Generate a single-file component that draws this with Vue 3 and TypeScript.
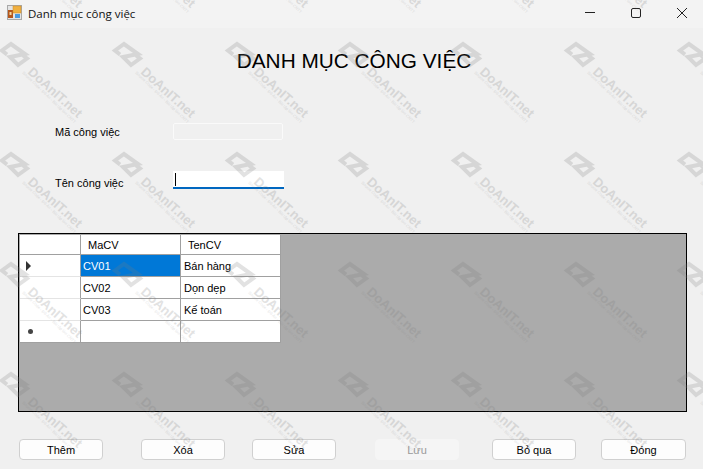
<template>
  <div class="window">
    <div class="titlebar">
      <svg class="app-icon" width="16" height="16" viewBox="0 0 16 16">
        <rect x="0.5" y="0.5" width="14" height="14" fill="#e4e4e4" stroke="#a8a8a8" />
        <rect x="1" y="5" width="5" height="8" fill="#b5561c" />
        <rect x="2.5" y="7" width="2" height="3" fill="#f6d9a0" />
        <rect x="6" y="1" width="8" height="7" fill="#f0b040" stroke="#c98a2a" stroke-width="0.5" />
        <rect x="8" y="9" width="5" height="4" fill="#4a9ae0" />
      </svg>
      <span class="title-text">Danh mục công việc</span>
      <div class="controls">
        <svg width="46" height="30" viewBox="0 0 46 30"><path d="M18 12.5h10" stroke="#222" fill="none" /></svg>
        <svg width="46" height="30" viewBox="0 0 46 30"><rect x="18.5" y="8.5" width="9" height="9" rx="1.5" stroke="#222" fill="none" /></svg>
        <svg width="46" height="30" viewBox="0 0 46 30"><path d="M18 8l10 10M28 8l-10 10" stroke="#222" fill="none" /></svg>
      </div>
    </div>

    <div class="form-body">
      <h1 class="heading">DANH MỤC CÔNG VIỆC</h1>

      <div class="field first">
        <label>Mã công việc</label>
        <div class="input disabled"></div>
      </div>
      <div class="field second">
        <label>Tên công việc</label>
        <div class="input focused"><span class="caret"></span></div>
      </div>

      <div class="grid-view">
        <div class="grid-table">
          <div class="cell head"></div>
          <div class="cell head col">MaCV</div>
          <div class="cell head col">TenCV</div>
          <template v-for="(row, i) in rows" :key="row.ma">
            <div class="cell row-head">
              <svg v-if="i === 0" width="7" height="10" viewBox="0 0 7 10"><path d="M1 0l5 5-5 5z" fill="#333" /></svg>
            </div>
            <div class="cell ma" :class="{ selected: i === 0 }">{{ row.ma }}</div>
            <div class="cell">{{ row.ten }}</div>
          </template>
          <div class="cell row-head new-row"><span class="star"></span></div>
          <div class="cell"></div>
          <div class="cell"></div>
        </div>
      </div>

      <div class="buttons">
        <button v-for="b in buttons" :key="b" type="button" :disabled="b === 'Lưu'">{{ b }}</button>
      </div>
    </div>

    <svg class="watermark" width="703" height="469">
      <g v-for="m in marks" :key="m" :transform="m">
        <path class="wm-logo" d="M8 12.5 L3 8.5 L12 2 L26 12 L11 15 L19 23 L28 16.5 L23.5 13" />
        <g transform="translate(28 31) rotate(42)">
          <text class="wm-big">DoAnIT.net</text>
        </g>
        <g transform="translate(23 31) rotate(44)">
          <text class="wm-small">Source Code - Đồ Án - Bài tập lớn CNTT</text>
        </g>
      </g>
    </svg>
  </div>
</template>

<script setup lang="ts">
const rows = [
  { ma: 'CV01', ten: 'Bán hàng' },
  { ma: 'CV02', ten: 'Dọn dẹp' },
  { ma: 'CV03', ten: 'Kế toán' },
]
const buttons = ['Thêm', 'Xóa', 'Sửa', 'Lưu', 'Bỏ qua', 'Đóng']

// watermark repeats every 113 x 110
const marks: string[] = []
for (let r = -1; r < 4; r++) {
  for (let c = 0; c < 7; c++) {
    marks.push(`translate(${c * 113 - 1} ${r * 110 + 42})`)
  }
}
</script>

<style>
html, body { margin: 0; background: #f0f0f0; }
</style>

<style scoped>
.window { position: relative; width: 703px; height: 469px; overflow: hidden; background: #f0f0f0; font-family: "Liberation Sans", Arial, sans-serif; font-size: 11px; color: #000; }
.titlebar { height: 28px; background: #f3f3f3; display: flex; align-items: center; padding-left: 7px; }
.app-icon { flex: none; margin-top: -2px; }
.title-text { margin-left: 5px; margin-top: -2px; font-size: 11.5px; font-family: "Open Sans", sans-serif; color: #111; }
.controls { margin-left: auto; margin-right: -2px; display: flex; align-self: flex-start; }
.controls svg { display: block; }
.form-body { padding: 0 16px 0 18px; }
.heading { margin: 18px 0 0; height: 30px; font-size: 20.8px; line-height: 30px; font-weight: 400; text-align: center; padding-left: 3px; }
.field { display: flex; align-items: center; }
.field label { width: 118px; margin-left: 37px; flex: none; }
.field.first { margin-top: 47px; }
.field.second { margin-top: 31px; }
.field.second label { margin-top: 6px; }
.input { box-sizing: border-box; width: 111px; }
.input.disabled { height: 17px; border: 1px solid #fafafa; border-radius: 2px; width: 110px; }
.input.focused { height: 18px; background: #fff; border-bottom: 2px solid #0067c0; position: relative; }
.caret { position: absolute; left: 2px; top: 2px; width: 1px; height: 13px; background: #000; }
.grid-view { box-sizing: border-box; width: 669px; height: 179px; margin-top: 44px; background: #ababab; border: 1px solid #000; padding: 1px; }
.grid-table { display: grid; grid-template-columns: 61px 100px 100px; grid-template-rows: 20px; grid-auto-rows: 22px; width: 261px; }
.cell { box-sizing: border-box; background: #fff; border-right: 1px solid #a0a0a0; border-bottom: 1px solid #a0a0a0; display: flex; align-items: center; padding-left: 3px; white-space: nowrap; }
.cell.ma { padding-left: 2px; }
.cell.head.col { padding-left: 7px; }
.row-head { padding-left: 5px; border-bottom-color: #e4e4e4; }
.selected { background: #0078d7; color: #fff; }
.new-row { padding-left: 8px; border-bottom-color: #a0a0a0; }
.star { width: 5px; height: 5px; border-radius: 50%; background: #444; }
.buttons { display: flex; margin-top: 27px; margin-left: 1px; }
button { box-sizing: border-box; width: 84px; height: 21px; padding: 0; background: #fdfdfd; border: 1px solid #d0d0d0; border-radius: 4px; font: 11px "Liberation Sans", Arial, sans-serif; color: #000; }
button:nth-child(2) { margin-left: 38px; }
button:nth-child(3) { margin-left: 27px; }
button:nth-child(4) { margin-left: 39px; background: #f5f5f5; border-color: #f5f5f5; color: #9a9a9a; }
button:nth-child(5) { margin-left: 33px; }
button:nth-child(6) { margin-left: 25px; width: 85px; }
.watermark { position: absolute; left: 0; top: 0; pointer-events: none; opacity: 0.22; }
.wm-logo { fill: none; stroke: #7d7d7d; stroke-width: 4; }
.wm-big { font: 700 13px "Liberation Sans", Arial, sans-serif; fill: #7d7d7d; }
.wm-small { font: 4px "Liberation Sans", Arial, sans-serif; fill: #7d7d7d; }
</style>
